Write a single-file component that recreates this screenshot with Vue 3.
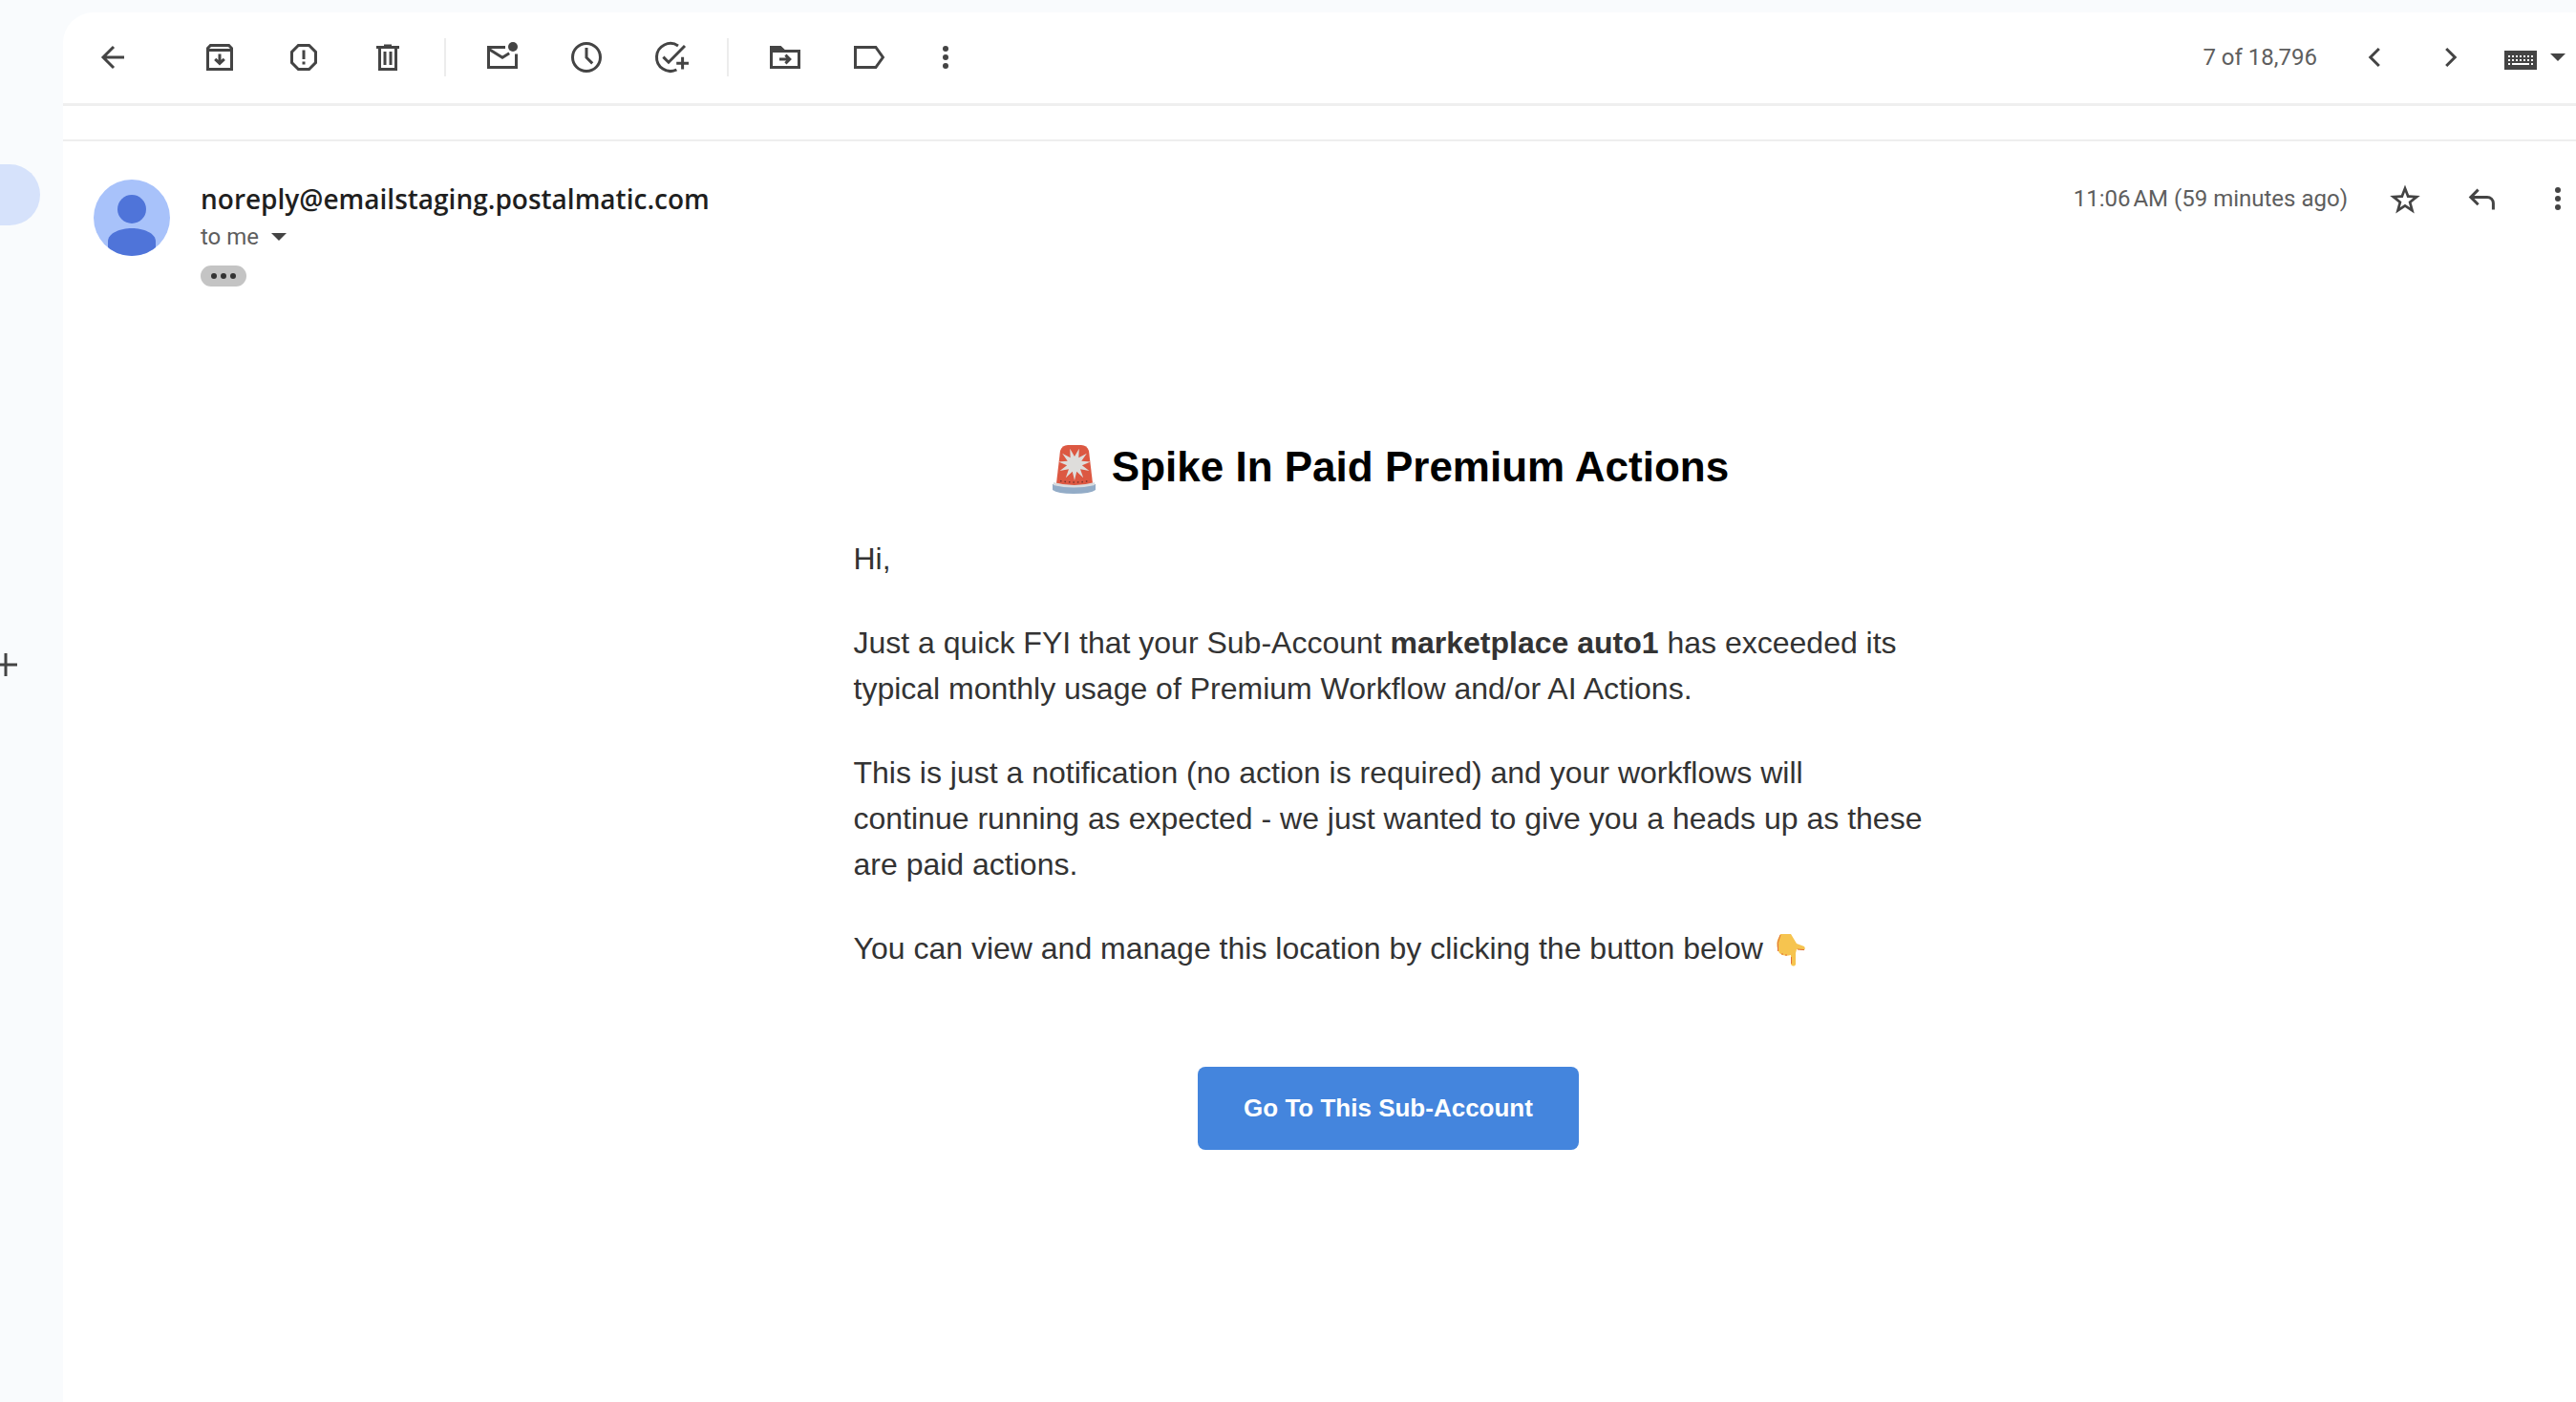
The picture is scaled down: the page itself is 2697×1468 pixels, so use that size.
<script setup>
const burst = (points, cx, cy, outer, inner) =>
  Array.from({ length: points * 2 }, (_, i) => {
    const angle = Math.PI / 2 + (i * Math.PI) / points
    const radius = i % 2 ? inner : outer
    return `${(cx + radius * Math.cos(angle)).toFixed(2)},${(cy + radius * Math.sin(angle)).toFixed(2)}`
  }).join(' ')

const starPoints = '10,2.7 12.06,8.17 17.89,8.44 13.33,12.08 14.88,17.71 10,14.5 5.12,17.71 6.67,12.08 2.11,8.44 7.94,8.17'
const flash = burst(11, 23, 20, 17, 8)
const messageTools = ['archive', 'spam', 'trash']
const stateTools = ['unread', 'snooze', 'task']
const fileTools = ['move', 'label']
const labels = {
  archive: 'Archive',
  spam: 'Report spam',
  trash: 'Delete',
  unread: 'Mark as unread',
  snooze: 'Snooze',
  task: 'Add to tasks',
  move: 'Move to',
  label: 'Labels'
}
const shapes = {
  archive: '<path d="M3.75 5.3 5.2 3.75h9.6l1.45 1.55v10.95H3.75zM3.75 6.3h12.5"/><path d="M10 8.3v4.6M7.6 10.9l2.4 2.3 2.4-2.3"/>',
  spam: '<path d="M7.2 3.75h5.6l3.45 3.45v5.6l-3.45 3.45H7.2L3.75 12.8V7.2zM10 6.2v4.8M10 12.3v1.5"/>',
  trash: '<path d="M4 4.75h12M8 4h4M5.75 5v11.25h8.5V5M8.5 7v7M11.5 7v7"/>',
  unread: '<path d="M11.5 4.75H2.75v10.5h14.5V8.2M3 5.7l7 4.4 3.6-2.2"/><circle cx="15.5" cy="4.5" r="2.5" fill="currentColor" stroke="none"/>',
  snooze: '<circle cx="10" cy="10" r="7.25"/><path d="M10 5v5.1l3.1 3.1"/>',
  task: '<path d="M14 3.95A7.25 7.25 0 1 0 13.2 16.5M6.2 9.8 9 12.6l8.5-8.6M16.3 9.9v6.4M13.1 13.1h6.4"/>',
  move: '<path d="M2.75 6.75h14.5v8.5H2.75z"/><path d="M2.75 6.5V4.75H7.5L9.3 6.5z" fill="currentColor"/><path d="M7 11h5M10.2 8.8l2.2 2.2-2.2 2.2"/>',
  label: '<path d="M2.75 4.75h10.7L17.2 10l-3.75 5.25H2.75z"/>'
}
</script>

<template>
  <div class="app">
    <nav class="rail" aria-label="Mailboxes">
      <a class="current" href="#inbox" aria-label="Inbox"></a>
      <button class="plus" aria-label="Create label">
        <svg viewBox="0 0 18 24"><path d="M0 12h18M6 0v24" /></svg>
      </button>
    </nav>

    <main class="panel">
      <header class="toolbar">
        <button class="tool back" aria-label="Back">
          <svg class="icon" viewBox="0 0 20 20"><path d="M16 10H5M10.5 4.5 5 10l5.5 5.5" /></svg>
        </button>
        <div class="tools">
          <button v-for="t in messageTools" :key="t" class="tool" :aria-label="labels[t]">
            <svg class="icon" viewBox="0 0 20 20" v-html="shapes[t]"></svg>
          </button>
        </div>
        <span class="divider"></span>
        <div class="tools">
          <button v-for="t in stateTools" :key="t" class="tool" :aria-label="labels[t]">
            <svg class="icon" viewBox="0 0 20 20" v-html="shapes[t]"></svg>
          </button>
        </div>
        <span class="divider"></span>
        <div class="tools">
          <button v-for="t in fileTools" :key="t" class="tool" :aria-label="labels[t]">
            <svg class="icon" viewBox="0 0 20 20" v-html="shapes[t]"></svg>
          </button>
          <button class="tool narrow" aria-label="More">
            <svg class="icon dots" viewBox="0 0 20 20"><circle cx="10" cy="5.5" r="1.5" /><circle cx="10" cy="10" r="1.5" /><circle cx="10" cy="14.5" r="1.5" /></svg>
          </button>
        </div>

        <div class="pager">
          <span class="count">7 of 18,796</span>
          <button class="tool" aria-label="Newer">
            <svg class="icon" viewBox="0 0 20 20"><path d="M12.4 5.5 7.9 10l4.5 4.5" /></svg>
          </button>
          <button class="tool" aria-label="Older">
            <svg class="icon" viewBox="0 0 20 20"><path d="M7.6 5.5 12.1 10l-4.5 4.5" /></svg>
          </button>
          <button class="keyboard" aria-label="Input tools">
            <svg width="34" height="26" viewBox="0 -6 34 26">
              <path d="M0 0h34v20H0z" fill="#444" />
              <path d="M4 6h26M4 10h26" stroke="#fff" stroke-width="2" stroke-dasharray="2 2" />
              <path d="M4 14h2M8 14h18M28 14h2" stroke="#fff" stroke-width="2" />
            </svg>
            <svg class="caret" viewBox="0 0 16 8"><path d="M0 0h16L8 8z" /></svg>
          </button>
        </div>
      </header>
      <div class="strip"></div>

      <article class="message">
        <svg class="avatar" viewBox="0 0 80 80" role="img" aria-label="Sender">
          <defs><clipPath id="avatar-clip"><circle cx="40" cy="40" r="40" /></clipPath></defs>
          <g clip-path="url(#avatar-clip)">
            <path d="M0 0h80v80H0z" fill="#a8c2fa" />
            <circle cx="40" cy="31" r="15" fill="#4f74d9" />
            <path d="M15 80V65C15 56 28 51 40 51s25 5 25 14v15z" fill="#4f74d9" />
          </g>
        </svg>

        <div class="content">
          <div class="meta">
            <h2 class="sender">noreply@emailstaging.postalmatic.com</h2>
            <div class="actions">
              <span class="time">11:06&#8239;AM (59 minutes ago)</span>
              <button class="tool" aria-label="Star">
                <svg class="icon dots" viewBox="0 0 20 20">
                  <polygon :points="starPoints" />
                  <polygon :points="starPoints" class="hole" />
                </svg>
              </button>
              <button class="tool" aria-label="Reply">
                <svg class="icon" viewBox="0 0 20 20"><path d="M8.3 5.3 4.4 9.2l3.9 3.9M4.4 9.2H13a3.2 3.2 0 0 1 3.2 3.2v3.3" /></svg>
              </button>
              <button class="tool narrow" aria-label="More options">
                <svg class="icon dots" viewBox="0 0 20 20"><circle cx="10" cy="5.5" r="1.5" /><circle cx="10" cy="10" r="1.5" /><circle cx="10" cy="14.5" r="1.5" /></svg>
              </button>
            </div>
          </div>
          <button class="recipient">
            to me
            <svg class="caret" viewBox="0 0 16 8"><path d="M0 0h16L8 8z" /></svg>
          </button>
          <button class="trimmed" aria-label="Show trimmed content">
            <span></span><span></span><span></span>
          </button>

          <section class="mail">
            <h1>
              <svg class="siren" viewBox="-5 -6 55 58" aria-hidden="true">
                <path d="M0 41 Q22 34 45 41 V47 Q40 51 22 51 Q5 51 0 47z" fill="#93acc7" />
                <path d="M8 6Q10 0 16 0h14q6 0 8 6l4 34q-19 6-38 0z" fill="#dc5842" />
                <path d="M1 39q22 6 43 0v3q-22 5-43 0z" fill="#d9dcdf" />
                <path d="M8 37.500q15 3 30 0" fill="none" stroke="#7d3229" stroke-width="1.500" stroke-dasharray="1.500 3" />
                <polygon :points="flash" fill="#dedddb" />
              </svg>
              Spike In Paid Premium Actions
            </h1>
            <p>Hi,</p>
            <p>Just a quick FYI that your Sub-Account <strong>marketplace auto1</strong> has exceeded its typical monthly usage of Premium Workflow and/or AI Actions.</p>
            <p>This is just a notification (no action is required) and your workflows will continue running as expected - we just wanted to give you a heads up as these are paid actions.</p>
            <p>
              You can view and manage this location by clicking the button below
              <svg class="hand" viewBox="-5 0 40 34" aria-hidden="true">
                <path d="M4 0h11l6 10 8 3q2 3-1 4l-7-1-1 4v12q-2 3-5 0V22q-8 2-12-2Q-1 12 1 6z" fill="#f6c44f" />
                <path d="M4 1Q0 9 1.500 18M6 20v2M10 21v2M15.500 24v7M22 16l7 .6" fill="none" stroke="#e2703a" />
              </svg>
            </p>
            <a class="cta" href="#sub-account">Go To This Sub-Account</a>
          </section>
        </div>
      </article>
    </main>
  </div>
</template>

<style>
body {
  background: #f9fbfd;
}
</style>

<style scoped>
.app {
  display: flex;
  min-height: 100vh;
  color: #444;
  font-family: Roboto, "Liberation Sans", sans-serif;
}
button {
  display: flex;
  align-items: center;
  justify-content: center;
  padding: 0;
  border: 0;
  background: none;
  color: inherit;
  font: inherit;
}
svg {
  flex: none;
  overflow: visible;
}
.rail {
  flex: none;
  width: 66px;
  padding-top: 172px;
}
.current {
  display: block;
  width: 42px;
  height: 64px;
  border-radius: 0 32px 32px 0;
  background: #d6e2fb;
}
.plus {
  margin-top: 448px;
}
.plus svg {
  width: 18px;
  height: 24px;
  stroke: #444;
  stroke-width: 3;
}
.panel {
  flex: 1;
  min-width: 0;
  margin-top: 13px;
  border-radius: 32px 0 0 0;
  background: #fff;
}
.toolbar {
  display: flex;
  align-items: center;
  height: 94px;
  padding: 0 11px 1px 32px;
  border-bottom: 3px solid #efefef;
}
.tool {
  width: 40px;
  height: 40px;
}
.narrow {
  width: 24px;
}
.icon {
  width: 40px;
  height: 40px;
  fill: none;
  stroke: currentColor;
  stroke-width: 1.5;
}
.dots {
  fill: currentColor;
  stroke: none;
}
.hole {
  fill: #fff;
  transform: scale(0.54);
  transform-origin: 10px 11px;
}
.back {
  margin-right: 72px;
}
.tools {
  display: flex;
  gap: 48px;
}
.divider {
  width: 2px;
  height: 40px;
  margin: 0 39px;
  background: #ececec;
}
.pager {
  display: flex;
  align-items: center;
  gap: 40px;
  margin-left: auto;
}
.count,
.time,
.recipient {
  color: #5e5e5e;
  font-size: 24px;
  line-height: 40px;
}
.keyboard {
  gap: 14px;
  margin-left: -4px;
}
.caret {
  width: 16px;
  height: 8px;
  fill: #444;
}
.strip {
  height: 35px;
  border-bottom: 2px solid #eee;
}
.message {
  display: flex;
  gap: 32px;
  padding: 40px 0 60px 32px;
}
.avatar {
  width: 80px;
  height: 80px;
}
.content {
  flex: 1;
  min-width: 0;
}
.meta {
  display: flex;
  align-items: center;
  justify-content: space-between;
  padding-right: 7px;
}
.sender {
  margin: 0;
  color: #1f1f1f;
  font-family: "Open Sans", "Noto Sans", sans-serif;
  font-size: 28px;
  font-weight: 600;
  line-height: 40px;
}
.actions {
  display: flex;
  align-items: center;
  gap: 40px;
}
.actions .narrow {
  margin-left: 8px;
}
.recipient {
  gap: 13px;
}
.trimmed {
  gap: 4px;
  width: 48px;
  height: 22px;
  margin-top: 10px;
  border-radius: 11px;
  background: #c4c4c4;
}
.trimmed span {
  width: 6px;
  height: 6px;
  border-radius: 50%;
  background: #333;
}
.mail {
  max-width: 1120px;
  margin: 160px auto 0;
  color: #333;
  font-family: "Liberation Sans", Arial, sans-serif;
  font-size: 32px;
  line-height: 48px;
}
h1 {
  display: flex;
  align-items: center;
  justify-content: center;
  gap: 12px;
  margin: 0 0 43px;
  color: #000;
  font-size: 44px;
  line-height: 58px;
}
.siren {
  width: 55px;
  height: 58px;
}
p {
  margin: 0 0 40px;
}
.hand {
  width: 40px;
  height: 34px;
  vertical-align: -8px;
}
.cta {
  display: block;
  width: fit-content;
  margin: 100px auto 0;
  padding: 28px 48px;
  border-radius: 8px;
  background: #4485dd;
  color: #fff;
  font-size: 26px;
  font-weight: 700;
  line-height: 31px;
  text-decoration: none;
}
</style>
